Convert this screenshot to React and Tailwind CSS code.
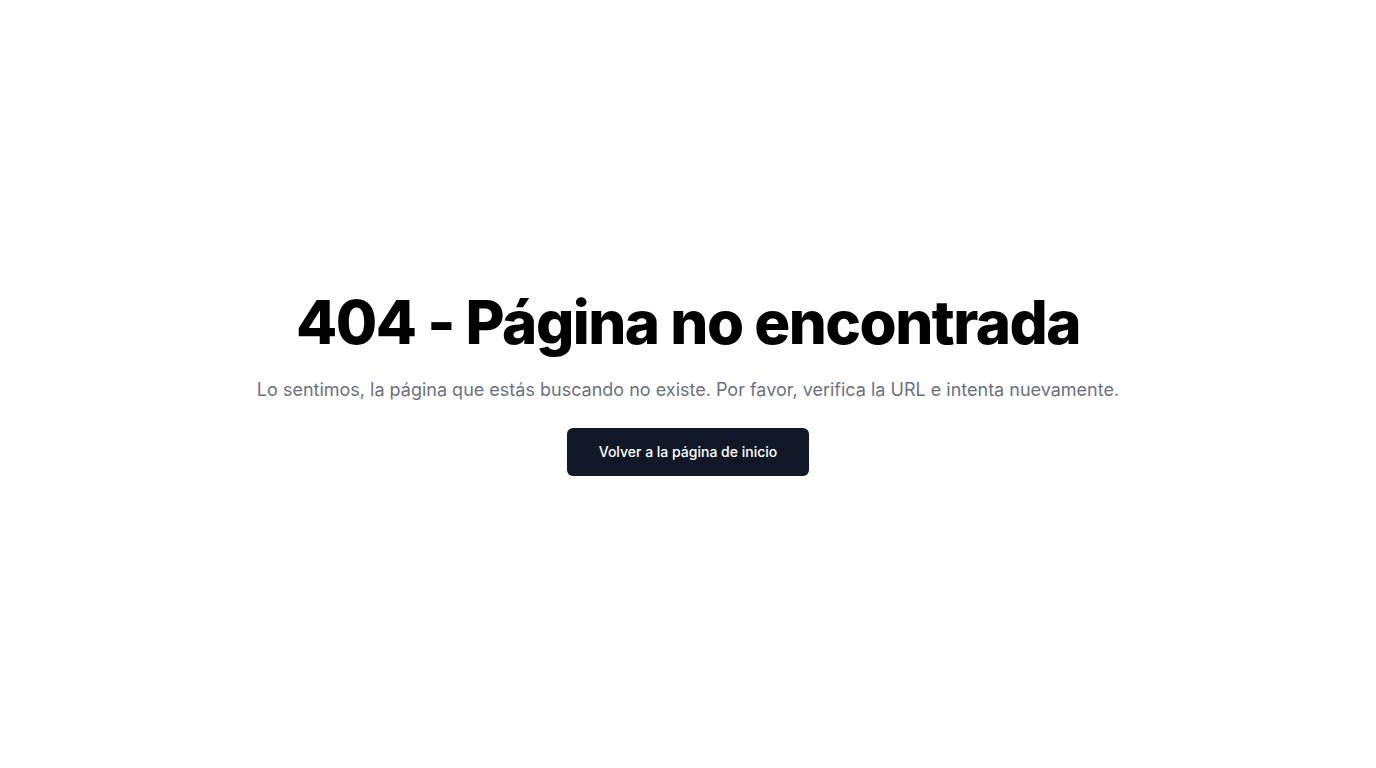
export default function App() {
  return (
    <div className="min-h-screen flex flex-col items-center justify-center bg-white font-['Inter',sans-serif]">
      <h1 className="text-6xl font-extrabold tracking-tight text-black">404 - Página no encontrada</h1>
      <p className="mt-6 text-lg text-gray-500">
        Lo sentimos, la página que estás buscando no existe. Por favor, verifica la URL e intenta nuevamente.
      </p>
      <button className="mt-6 h-12 px-8 rounded-md bg-gray-900 text-sm font-medium text-white">
        Volver a la página de inicio
      </button>
    </div>
  );
}
